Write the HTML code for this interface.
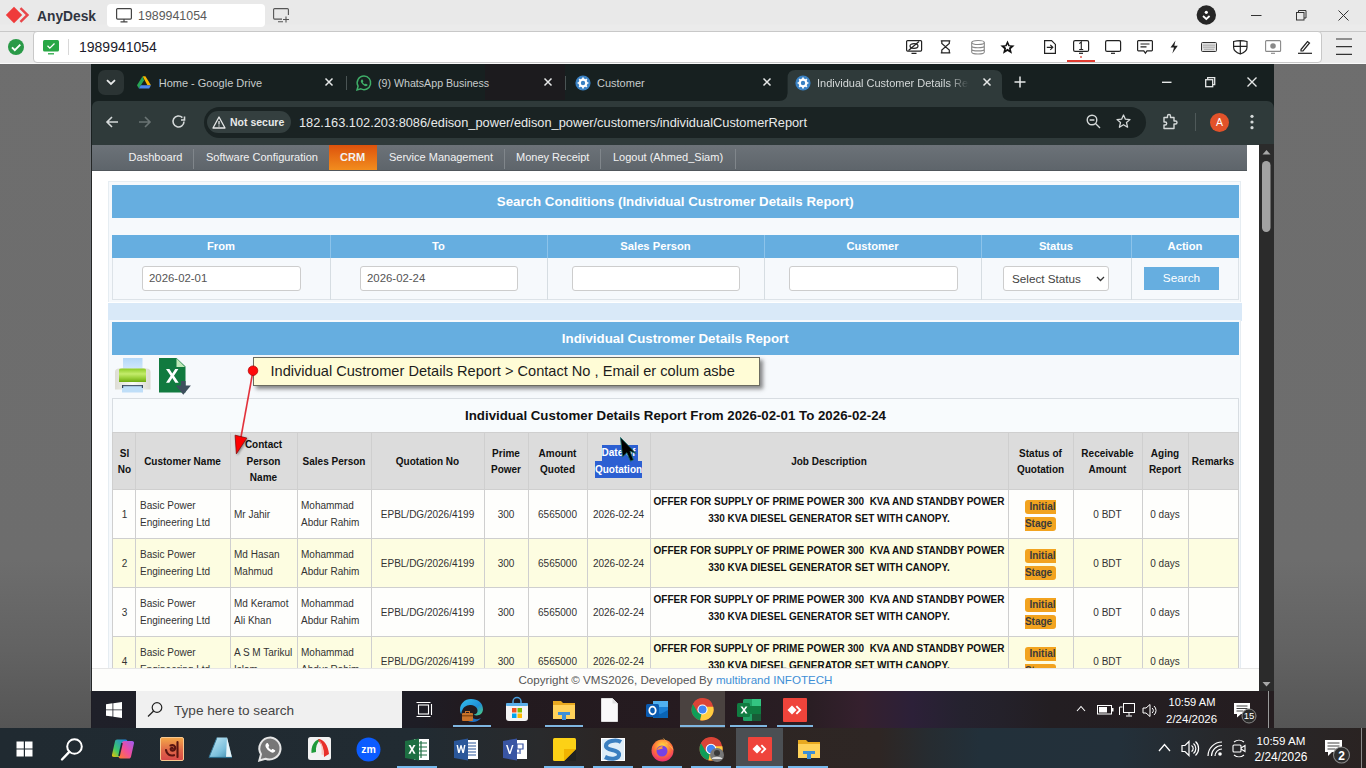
<!DOCTYPE html><html><head><meta charset="utf-8"><style>
*{box-sizing:border-box;margin:0;padding:0}
html,body{width:1366px;height:768px;overflow:hidden}
body{position:relative;background:linear-gradient(#6e6e6e 0px,#6d6d6d 560px,#626262 650px,#555555 728px,#555555 768px);font-family:"Liberation Sans",sans-serif;}
.a{position:absolute}
svg{display:block;overflow:visible}
.nw{white-space:nowrap}
#adtop{left:0;top:0;width:1366px;height:32px;background:linear-gradient(#e9e9e9 24px,#ebebeb 25px,#ebebeb 31px);border-bottom:1px solid #c8c8c8}
#adrow{left:0;top:32px;width:1366px;height:32px;background:linear-gradient(#ececec 31px,#fafafa 31px)}
#adaddr{left:33px;top:31px;width:1289px;height:32px;background:#fff;border:1px solid #c8c8c8;border-radius:4px}
#tabs{left:92px;top:64px;width:1182px;height:46px;background:#172020}
#tool{left:92px;top:101px;width:1182px;height:44px;background:#2f3a3a;border-radius:6px 7px 0 0}
#page{left:92px;top:145px;width:1167px;height:546px;background:#fff}
#sb{left:1259px;top:144px;width:15px;height:547px;background:#2b2b2b}
.tt{color:#c7cccc;font-size:11px;white-space:nowrap}
.ni{position:absolute;top:150.5px;color:#f2f2f2;font-size:11px;line-height:13px;white-space:nowrap}
.sep{position:absolute;top:149px;width:1px;height:20px;background:#80868b}
.blue{background:#66aee0}
.hd{color:#fff;font-weight:bold;font-size:13.3px;text-align:center;line-height:16px}
.inp{background:#fff;border:1px solid #cdcdcd;border-radius:3px;font-size:11.4px;color:#555;padding-left:6px;line-height:23px}
.vl{position:absolute;width:1px;background:#d2d8dc}
.cell{position:absolute;display:flex;align-items:center;font-size:10px;line-height:16.6px;color:#333}
.c{justify-content:center;text-align:center}
.hb{font-weight:bold;color:#111}
.lbl{background:#f2a31f;font-weight:bold;color:#3a3a3a;padding:1px 4px 2px;border-radius:3px;line-height:16.6px}
</style></head><body>
<div id="adtop" class="a"></div><div id="adrow" class="a"></div><div id="adaddr" class="a"></div>
<svg class="a" style="left:5px;top:5px" width="27" height="21" viewBox="0 0 27 21"><path d="M9 1.8L17.2 10L9 18.2L0.8 10Z" fill="#ef3b3b"/><path d="M16.3 2.2L24.2 10L16.3 17.8L14.6 16.1L20.7 10L14.6 3.9Z" fill="#e8464a"/></svg>
<div class="a nw" style="left:37px;top:7.5px;font-size:13.8px;font-weight:bold;line-height:17px;color:#30343f">AnyDesk</div>
<div class="a" style="left:107px;top:4px;width:158px;height:23px;background:#fff;border-radius:4px"></div>
<svg class="a" style="left:116px;top:8px" width="16" height="15" viewBox="0 0 16 15"><rect x="0.6" y="0.6" width="14.8" height="10.5" rx="1" fill="none" stroke="#444" stroke-width="1.2"/><path d="M8 11v2.5M4.5 13.8h7" stroke="#444" stroke-width="1.2"/></svg>
<div class="a nw" style="left:138px;top:9px;font-size:12.4px;line-height:15px;color:#5a5a5a">1989941054</div>
<svg class="a" style="left:273px;top:8px" width="17" height="15" viewBox="0 0 17 15"><path d="M9 11.1H1.6a1 1 0 0 1-1-1V1.6a1 1 0 0 1 1-1h12.8a1 1 0 0 1 1 1V7" fill="none" stroke="#555" stroke-width="1.1"/><path d="M5 13.8h5M13 8.5v6M10 11.5h6" stroke="#555" stroke-width="1.1"/></svg>
<svg class="a" style="left:1196px;top:5px" width="21" height="21" viewBox="0 0 21 21"><circle cx="10.3" cy="10" r="9.7" fill="#262626"/><circle cx="10.3" cy="7.3" r="1.6" fill="#fff"/><path d="M7 11l3.3 3 3.3-3" stroke="#fff" stroke-width="1.8" fill="none"/></svg>
<svg class="a" style="left:1250px;top:8px" width="100" height="14" viewBox="0 0 100 14"><path d="M1 7.5h10.5" stroke="#333" stroke-width="1"/><rect x="46.5" y="4.5" width="7.5" height="7.5" fill="none" stroke="#333" stroke-width="1"/><path d="M48.5 4.5V2.5h7.5v7.5h-2" fill="none" stroke="#333" stroke-width="1"/><path d="M88.5 2.5l10 10M98.5 2.5l-10 10" stroke="#333" stroke-width="1"/></svg>
<svg class="a" style="left:8px;top:39px" width="17" height="17" viewBox="0 0 17 17"><circle cx="8" cy="8" r="8" fill="#2a9a48"/><path d="M4 8.3l2.8 2.8L12.3 5.6" stroke="#fff" stroke-width="1.9" fill="none"/></svg>
<svg class="a" style="left:43px;top:40px" width="17" height="15" viewBox="0 0 17 15"><rect x="0" y="0" width="16" height="11.5" rx="1.5" fill="#28a745"/><path d="M4.5 5.8l2.3 2.3L11.5 3.5" stroke="#fff" stroke-width="1.3" fill="none"/><path d="M5 13.8h6" stroke="#28a745" stroke-width="1.3"/></svg>
<div class="a" style="left:68px;top:39px;width:1px;height:16px;background:#d8d8d8"></div>
<div class="a nw" style="left:79px;top:39px;font-size:14px;line-height:17px;color:#1b1b2b">1989941054</div>
<svg class="a" style="left:906px;top:40px" width="17" height="15" viewBox="0 0 17 15"><rect x="0.6" y="0.6" width="15" height="10.5" rx="1" stroke="#222" stroke-width="1.2" fill="none"/><path d="M2.5 10.5L13 1.5M5.5 13.3h5" stroke="#222" stroke-width="1.2" fill="none"/><ellipse cx="8" cy="6" rx="4" ry="2.3" stroke="#222" stroke-width="1.2" fill="none"/></svg>
<svg class="a" style="left:940px;top:40px" width="17" height="15" viewBox="0 0 17 15"><path d="M0.8 0.8h9.5M0.8 12.8h9.5M1.8 1v2.5L5.5 6.8L9.3 3.5V1M1.8 12.6v-2.6L5.5 6.8L9.3 10v2.6" stroke="#222" stroke-width="1.2" fill="none"/></svg>
<svg class="a" style="left:971px;top:40px" width="17" height="15" viewBox="0 0 17 15"><ellipse cx="7" cy="2.5" rx="6.3" ry="2" stroke="#888" stroke-width="1.1" fill="none"/><path d="M0.7 2.5v9.5c0 1.1 2.8 2 6.3 2s6.3-.9 6.3-2V2.5M0.7 5.7c0 1.1 2.8 2 6.3 2s6.3-.9 6.3-2M0.7 8.9c0 1.1 2.8 2 6.3 2s6.3-.9 6.3-2" stroke="#888" stroke-width="1.1" fill="none"/></svg>
<svg class="a" style="left:1000px;top:40px" width="17" height="15" viewBox="0 0 17 15"><path d="M7.5 0.5l2.1 4.7 5 .4-3.8 3.3 1.2 4.9-4.5-2.7-4.5 2.7 1.2-4.9L0.4 5.6l5-.4Z" fill="#111"/><path d="M7.5 4.3l.9 2 2.1.2-1.6 1.4.5 2-1.9-1.1-1.9 1.1.5-2-1.6-1.4 2.1-.2Z" fill="#fff"/></svg>
<svg class="a" style="left:1044px;top:40px" width="17" height="15" viewBox="0 0 17 15"><path d="M0.6 0.6h7l3.8 3.8v9H0.6Z" stroke="#222" stroke-width="1.2" fill="none"/><path d="M2.8 7.3h6M6.3 4.8l2.5 2.5-2.5 2.5" stroke="#222" stroke-width="1.2" fill="none"/></svg>
<svg class="a" style="left:1073px;top:40px" width="17" height="15" viewBox="0 0 17 15"><rect x="0.6" y="0.6" width="15" height="10.8" rx="1.5" stroke="#222" stroke-width="1.2" fill="none"/><path d="M6.3 3.6l2-1.6v7.5M6.2 9.5h4" stroke="#222" stroke-width="1.1" fill="none"/><path d="M6 13.3h4" stroke="#222" stroke-width="1.2" fill="none"/></svg>
<svg class="a" style="left:1105px;top:40px" width="17" height="15" viewBox="0 0 17 15"><rect x="0.6" y="0.6" width="15" height="10.8" rx="1.5" stroke="#222" stroke-width="1.2" fill="none"/><path d="M6 13.3h4" stroke="#222" stroke-width="1.2" fill="none"/></svg>
<svg class="a" style="left:1137px;top:40px" width="17" height="15" viewBox="0 0 17 15"><path d="M1.4 0.6h13.2a.8.8 0 0 1 .8.8v8.6a.8.8 0 0 1-.8.8H10l-1.6 2.3-1.6-2.3H1.4a.8.8 0 0 1-.8-.8V1.4a.8.8 0 0 1 .8-.8ZM3.5 4h9M3.5 6.8h6" stroke="#222" stroke-width="1.2" fill="none"/></svg>
<svg class="a" style="left:1169px;top:40px" width="17" height="15" viewBox="0 0 17 15"><path d="M6.5 0.5L1.5 7.5h3.5L3.3 13.5L8.8 5.8H5.3L6.5 0.5Z" fill="#222"/></svg>
<svg class="a" style="left:1201px;top:40px" width="17" height="15" viewBox="0 0 17 15"><rect x="0.5" y="2.5" width="15" height="9" rx="1" stroke="#333" stroke-width="1" fill="#ddd"/><path d="M2.5 5.2h11M2.5 7.2h11M3.5 9.3h9" stroke="#777" stroke-width="1" stroke-dasharray="1 1"/></svg>
<svg class="a" style="left:1233px;top:40px" width="17" height="15" viewBox="0 0 17 15"><path d="M0.6 1.5Q7.3 -0.2 14 1.5V7.5Q14 11.5 7.3 14Q0.6 11.5 0.6 7.5Z M7.3 0.7V13.8M0.6 6.3h13.4" stroke="#222" stroke-width="1.2" fill="none"/></svg>
<svg class="a" style="left:1265px;top:40px" width="17" height="15" viewBox="0 0 17 15"><rect x="0.6" y="0.6" width="15" height="10.8" rx="1" stroke="#888" stroke-width="1.1" fill="none"/><circle cx="8" cy="6" r="2.8" fill="#888"/><path d="M6 13.3h4" stroke="#888" stroke-width="1.1"/></svg>
<svg class="a" style="left:1298px;top:40px" width="17" height="15" viewBox="0 0 17 15"><path d="M3 9.5L9.5 1.5L11.5 3L5 11H3Z" stroke="#222" stroke-width="1.2" fill="none"/><path d="M0 13.3h14" stroke="#222" stroke-width="1.2"/></svg>
<div class="a" style="left:1067px;top:60px;width:28px;height:2px;background:#e03c31"></div>
<div class="a" style="left:1080px;top:56px;width:2px;height:2px;background:#e05a50;border-radius:1px"></div>
<svg class="a" style="left:1336px;top:38px" width="17" height="18" viewBox="0 0 17 18"><path d="M0 1h16M0 8.7h16M0 16.3h16" stroke="#333" stroke-width="1.2"/></svg>
<div id="tabs" class="a"></div><div id="tool" class="a"></div>
<div class="a" style="left:485px;top:64px;width:80px;height:36px;background:#1c1b1e"></div>
<div class="a" style="left:98px;top:70px;width:26px;height:25px;background:#2b3434;border-radius:7px"></div>
<svg class="a" style="left:106px;top:79px" width="10" height="7" viewBox="0 0 10 7"><path d="M1 1.2l4 3.8 4-3.8" stroke="#e8eaea" stroke-width="1.8" fill="none"/></svg>
<svg class="a" style="left:779px;top:70px" width="232" height="31" viewBox="0 0 232 31"><path d="M0 31Q8 31 8.6 23V8Q8.6 0 16.6 0H215Q223 0 223 8V23Q223.6 31 232 31Z" fill="#2f3a3a"/></svg>
<svg class="a" style="left:137px;top:75.5px" width="14" height="13" viewBox="0 0 14 13"><path d="M5.6 0.3h2.8L14 9.3h-3.6Z" fill="#f7b500"/><path d="M5.6 0.3L0 9.3l1.9 3.3L7 4.3Z" fill="#27a455"/><path d="M1.9 12.6h10.3L14 9.3H3.8Z" fill="#4a86f0"/></svg>
<div class="a tt" style="left:158.7px;top:77px;line-height:13px">Home - Google Drive</div>
<svg class="a" style="left:324.5px;top:78px" width="8" height="8" viewBox="0 0 8 8"><path d="M0.5 0.5l7 7M7.5 0.5l-7 7" stroke="#e6e8e8" stroke-width="1.5"/></svg>
<div class="a" style="left:346px;top:76px;width:1px;height:14px;background:#4a5454"></div>
<svg class="a" style="left:356px;top:75px" width="16" height="16" viewBox="0 0 16 16"><path d="M8 1a6.8 6.8 0 0 0-5.9 10.2L1 15l3.9-1.1A6.8 6.8 0 1 0 8 1Z" fill="none" stroke="#3fae68" stroke-width="1.5"/><path d="M5.6 4.6c.3-.3.7-.3.9 0l.8 1.4c.1.3 0 .6-.2.8l-.4.4c.4.9 1.2 1.7 2.1 2.1l.4-.4c.2-.2.5-.3.8-.2l1.4.8c.3.2.3.6 0 .9-.8.9-1.8 1-3 .4A7 7 0 0 1 5.2 7.6c-.6-1.2-.5-2.2.4-3Z" fill="#3fae68"/></svg>
<div class="a tt" style="left:378px;top:77px;line-height:13px;font-size:10.65px">(9) WhatsApp Business</div>
<svg class="a" style="left:543.5px;top:78px" width="8" height="8" viewBox="0 0 8 8"><path d="M0.5 0.5l7 7M7.5 0.5l-7 7" stroke="#e6e8e8" stroke-width="1.5"/></svg>
<div class="a" style="left:565px;top:76px;width:1px;height:14px;background:#4a5454"></div>
<svg class="a" style="left:575px;top:75px" width="16" height="16" viewBox="0 0 16 16"><circle cx="8" cy="8" r="7.6" fill="#3b82c4"/><circle cx="8" cy="8" r="3.3" fill="none" stroke="#fff" stroke-width="2.2"/><path d="M8 2.6v2M8 11.4v2M2.6 8h2M11.4 8h2M4.2 4.2l1.4 1.4M10.4 10.4l1.4 1.4M4.2 11.8l1.4-1.4M10.4 5.6l1.4-1.4" stroke="#fff" stroke-width="1.7"/></svg>
<div class="a tt" style="left:597px;top:77px;line-height:13px">Customer</div>
<svg class="a" style="left:763px;top:78px" width="8" height="8" viewBox="0 0 8 8"><path d="M0.5 0.5l7 7M7.5 0.5l-7 7" stroke="#e6e8e8" stroke-width="1.5"/></svg>
<svg class="a" style="left:795px;top:75px" width="16" height="16" viewBox="0 0 16 16"><circle cx="8" cy="8" r="7.6" fill="#3b82c4"/><circle cx="8" cy="8" r="3.3" fill="none" stroke="#fff" stroke-width="2.2"/><path d="M8 2.6v2M8 11.4v2M2.6 8h2M11.4 8h2M4.2 4.2l1.4 1.4M10.4 10.4l1.4 1.4M4.2 11.8l1.4-1.4M10.4 5.6l1.4-1.4" stroke="#fff" stroke-width="1.7"/></svg>
<div class="a tt" style="left:817px;top:77px;line-height:13px;width:152px;overflow:hidden;color:#d4d8d8;-webkit-mask-image:linear-gradient(90deg,#000 86%,transparent)">Individual Customer Details Report</div>
<svg class="a" style="left:982.5px;top:78px" width="8" height="8" viewBox="0 0 8 8"><path d="M0.5 0.5l7 7M7.5 0.5l-7 7" stroke="#e6e8e8" stroke-width="1.5"/></svg>
<svg class="a" style="left:1014px;top:76px" width="12" height="12" viewBox="0 0 12 12"><path d="M6 0.5v11M0.5 6h11" stroke="#e6e8e8" stroke-width="1.5"/></svg>
<svg class="a" style="left:1160px;top:76px" width="100" height="12" viewBox="0 0 100 12"><path d="M2 6.3h9.5" stroke="#e6e8e8" stroke-width="1.4"/><rect x="45.7" y="3.7" width="7" height="7" fill="none" stroke="#e6e8e8" stroke-width="1.3"/><path d="M47.7 3.6V1.6h7v7h-2" fill="none" stroke="#e6e8e8" stroke-width="1.3"/><path d="M87.5 1.5l9 9M96.5 1.5l-9 9" stroke="#e6e8e8" stroke-width="1.4"/></svg>
<svg class="a" style="left:104px;top:114px" width="85" height="16" viewBox="0 0 85 16"><path d="M14 8H3M8 3L3 8l5 5" stroke="#d5d9d9" stroke-width="1.6" fill="none"/><path d="M35 8h11M41 3l5 5-5 5" stroke="#6b7474" stroke-width="1.6" fill="none"/><path d="M80 7.5a5.5 5.5 0 1 1-1.6-3.9M80.5 2.5v3.5H77" stroke="#d5d9d9" stroke-width="1.6" fill="none"/></svg>
<div class="a" style="left:204px;top:107px;width:942px;height:31px;background:#1a2323;border-radius:16px"></div>
<div class="a" style="left:207px;top:111px;width:84px;height:22px;background:#343f3f;border-radius:11px"></div>
<svg class="a" style="left:212px;top:116px" width="14" height="13" viewBox="0 0 14 13"><path d="M7 1L13 12H1Z" fill="none" stroke="#e6e8e8" stroke-width="1.3" stroke-linejoin="round"/><path d="M7 5v3.5M7 9.6v1" stroke="#e6e8e8" stroke-width="1.3"/></svg>
<div class="a nw" style="left:230px;top:116px;font-size:10.5px;font-weight:bold;line-height:13px;color:#e8eaea">Not secure</div>
<div class="a nw" style="left:299px;top:115px;font-size:12.8px;line-height:15px;color:#e8eaea">182.163.102.203:8086/edison_power/edison_power/customers/individualCustomerReport</div>
<svg class="a" style="left:1086px;top:114px" width="16" height="16" viewBox="0 0 16 16"><circle cx="6" cy="6" r="4.8" fill="none" stroke="#d5d9d9" stroke-width="1.4"/><path d="M3.6 6h4.8M9.5 9.5l4.5 4.5" stroke="#d5d9d9" stroke-width="1.4"/></svg>
<svg class="a" style="left:1116px;top:114px" width="16" height="16" viewBox="0 0 16 16"><path d="M7.5 1l1.9 4.2 4.6.4-3.5 3 1.1 4.6-4.1-2.5-4.1 2.5 1.1-4.6-3.5-3 4.6-.4Z" fill="none" stroke="#d5d9d9" stroke-width="1.3" stroke-linejoin="round"/></svg>
<svg class="a" style="left:1162px;top:113px" width="18" height="18" viewBox="0 0 18 18"><path d="M2 4.5h3.5V3a1.5 1.5 0 0 1 3 0v1.5H12v3.5h1.5a1.5 1.5 0 0 1 0 3H12v4.5H2v-3.5h1.2a1.5 1.5 0 0 0 0-3H2Z" fill="none" stroke="#d5d9d9" stroke-width="1.4" stroke-linejoin="round"/></svg>
<div class="a" style="left:1195px;top:113px;width:1px;height:18px;background:#4f5959"></div>
<div class="a" style="left:1210px;top:112.5px;width:19px;height:19px;border-radius:50%;background:#e2522a;color:#fff;font-size:10.5px;line-height:19px;text-align:center">A</div>
<svg class="a" style="left:1250px;top:114px" width="4" height="16" viewBox="0 0 4 16"><circle cx="2" cy="2.3" r="1.6" fill="#d5d9d9"/><circle cx="2" cy="8" r="1.6" fill="#d5d9d9"/><circle cx="2" cy="13.7" r="1.6" fill="#d5d9d9"/></svg>
<div id="page" class="a"></div><div id="sb" class="a"></div>
<div class="a" style="left:91px;top:64px;width:1px;height:664px;background:linear-gradient(#172020 0px,#1a2020 80px,#252727 100px,#262828 627px,#1e1d25 628px)"></div><div class="a" style="left:90px;top:64px;width:1px;height:627px;background:#6f7377"></div>
<svg class="a" style="left:1259px;top:144px" width="15" height="547" viewBox="0 0 15 547"><path d="M3.5 10.5L7.5 6L11.5 10.5Z" fill="#a8a8a8"/><rect x="3" y="17" width="8.5" height="71" rx="4.2" fill="#a3a3a3"/><path d="M3.5 538L7.5 542.5L11.5 538Z" fill="#a8a8a8"/></svg>
<div class="a" style="left:92px;top:145px;width:1155px;height:26px;background:linear-gradient(#6c7278,#5e656b);border-bottom:1px solid #50565b"></div>
<div class="a" style="left:329px;top:145px;width:48px;height:24.5px;background:linear-gradient(#dd520c,#f28d1e)"></div>
<span class="ni" style="left:128.6px;">Dashboard</span>
<span class="ni" style="left:206px;">Software Configuration</span>
<span class="ni" style="left:340px;font-weight:bold">CRM</span>
<span class="ni" style="left:389px;">Service Management</span>
<span class="ni" style="left:516px;">Money Receipt</span>
<span class="ni" style="left:613px;">Logout (Ahmed_Siam)</span>
<span class="sep" style="left:193px"></span>
<span class="sep" style="left:504px"></span>
<span class="sep" style="left:600px"></span>
<span class="sep" style="left:735px"></span>
<div class="a" style="left:108px;top:181px;width:1133px;height:121px;background:#f6f9fc;border:1px solid #e6edf2;border-bottom:0"></div>
<div class="a blue hd" style="left:112px;top:185px;width:1126.5px;height:33px;line-height:33px">Search Conditions (Individual Custromer Details Report)</div>
<div class="a blue" style="left:112px;top:235px;width:1126.5px;height:23px"></div>
<div class="a" style="left:112px;top:258px;width:1127px;height:42px;border:1px solid #dde3e8;border-top:0;background:#f6f9fc"></div>
<div class="a hd" style="left:112px;top:235px;width:218px;height:23px;line-height:23px;font-size:11.2px">From</div>
<div class="a hd" style="left:330px;top:235px;width:217px;height:23px;line-height:23px;font-size:11.2px">To</div>
<div class="vl" style="left:330px;top:235px;height:65px;background:#d6dde2"></div>
<div class="vl" style="left:330px;top:235px;height:23px;background:#8cc3ea"></div>
<div class="a hd" style="left:547px;top:235px;width:217px;height:23px;line-height:23px;font-size:11.2px">Sales Person</div>
<div class="vl" style="left:547px;top:235px;height:65px;background:#d6dde2"></div>
<div class="vl" style="left:547px;top:235px;height:23px;background:#8cc3ea"></div>
<div class="a hd" style="left:764px;top:235px;width:217px;height:23px;line-height:23px;font-size:11.2px">Customer</div>
<div class="vl" style="left:764px;top:235px;height:65px;background:#d6dde2"></div>
<div class="vl" style="left:764px;top:235px;height:23px;background:#8cc3ea"></div>
<div class="a hd" style="left:981px;top:235px;width:150px;height:23px;line-height:23px;font-size:11.2px">Status</div>
<div class="vl" style="left:981px;top:235px;height:65px;background:#d6dde2"></div>
<div class="vl" style="left:981px;top:235px;height:23px;background:#8cc3ea"></div>
<div class="a hd" style="left:1131px;top:235px;width:108px;height:23px;line-height:23px;font-size:11.2px">Action</div>
<div class="vl" style="left:1131px;top:235px;height:65px;background:#d6dde2"></div>
<div class="vl" style="left:1131px;top:235px;height:23px;background:#8cc3ea"></div>
<div class="a inp" style="left:142px;top:266px;width:159px;height:25px">2026-02-01</div>
<div class="a inp" style="left:360px;top:266px;width:158px;height:25px">2026-02-24</div>
<div class="a inp" style="left:572px;top:266px;width:168px;height:25px"></div>
<div class="a inp" style="left:789px;top:266px;width:169px;height:25px"></div>
<div class="a inp" style="left:1003px;top:266px;width:106px;height:25px;padding-left:8px;color:#444;font-size:11.7px">Select Status<svg class="a" style="left:92px;top:9px" width="9" height="6"><path d="M1 1l3.5 3.5L8 1" stroke="#333" stroke-width="1.3" fill="none"/></svg></div>
<div class="a blue" style="left:1144px;top:267px;width:75px;height:23px;color:#fff;font-size:11.8px;text-align:center;line-height:23px">Search</div>
<div class="a" style="left:108px;top:303px;width:1134px;height:18px;background:#d9e9f8"></div>
<div class="a" style="left:108px;top:320px;width:1133px;height:360px;background:#f6f9fc;border-left:1px solid #e6edf2;border-right:1px solid #e6edf2"></div>
<div class="a blue hd" style="left:112px;top:322px;width:1126.5px;height:33px;line-height:33px">Individual Custromer Details Report</div>
<div class="a hd" style="left:112px;top:398px;width:1127px;height:35px;line-height:34px;color:#111;background:#f8fbfd;border:1px solid #d8dde2;border-bottom:0">Individual Customer Details Report From 2026-02-01 To 2026-02-24</div>
<div class="a" style="left:112px;top:432px;width:1127px;height:57px;background:#dcdcdc"></div>
<div class="a" style="left:112px;top:489px;width:1127px;height:49px;background:#fefefc"></div>
<div class="a" style="left:112px;top:538px;width:1127px;height:49px;background:#fdfde1"></div>
<div class="a" style="left:112px;top:587px;width:1127px;height:49px;background:#fefefc"></div>
<div class="a" style="left:112px;top:636px;width:1127px;height:49px;background:#fdfde1"></div>
<div class="cell c hb" style="left:113px;top:433.8px;width:23px;height:57px">Sl<br>No</div>
<div class="cell c hb" style="left:135px;top:433.7px;width:95px;height:57px">Customer Name</div>
<div class="cell c hb" style="left:230px;top:433.3px;width:67px;height:57px">Contact<br>Person<br>Name</div>
<div class="cell c hb" style="left:297px;top:433.7px;width:74px;height:57px">Sales Person</div>
<div class="cell c hb" style="left:371px;top:433.7px;width:113px;height:57px">Quotation No</div>
<div class="cell c hb" style="left:484px;top:433.8px;width:44px;height:57px">Prime<br>Power</div>
<div class="cell c hb" style="left:528px;top:433.8px;width:59px;height:57px">Amount<br>Quoted</div>
<div class="cell c hb" style="left:650px;top:433.7px;width:358px;height:57px">Job Description</div>
<div class="cell c hb" style="left:1008px;top:433.8px;width:65px;height:57px">Status of<br>Quotation</div>
<div class="cell c hb" style="left:1073px;top:433.8px;width:69px;height:57px">Receivable<br>Amount</div>
<div class="cell c hb" style="left:1142px;top:433.8px;width:46px;height:57px">Aging<br>Report</div>
<div class="cell c hb" style="left:1188px;top:433.7px;width:50px;height:57px">Remarks</div>
<div class="cell c" style="left:113px;top:491px;width:23px;height:49px;">1</div>
<div class="cell" style="left:135px;top:490px;width:95px;height:49px;padding-left:5px;">Basic Power<br>Engineering Ltd</div>
<div class="cell" style="left:230px;top:491px;width:67px;height:49px;padding-left:4px;">Mr Jahir</div>
<div class="cell" style="left:297px;top:490px;width:74px;height:49px;padding-left:4px;">Mohammad<br>Abdur Rahim</div>
<div class="cell c" style="left:371px;top:491px;width:113px;height:49px;">EPBL/DG/2026/4199</div>
<div class="cell c" style="left:484px;top:491px;width:44px;height:49px;">300</div>
<div class="cell c" style="left:528px;top:491px;width:59px;height:49px;">6565000</div>
<div class="cell c" style="left:587px;top:491px;width:63px;height:49px;">2026-02-24</div>
<div class="cell c" style="left:650px;top:490px;width:358px;height:49px;font-weight:bold;color:#111;padding-bottom:7px;">OFFER FOR SUPPLY OF PRIME POWER 300&nbsp; KVA AND STANDBY POWER<br>330 KVA DIESEL GENERATOR SET WITH CANOPY.</div>
<div class="cell c" style="left:1008px;top:490px;width:65px;height:49px;padding-top:2px;"><div><span class="lbl">Initial<br>Stage</span></div></div>
<div class="cell c" style="left:1073px;top:491px;width:69px;height:49px;">0 BDT</div>
<div class="cell c" style="left:1142px;top:491px;width:46px;height:49px;">0 days</div>
<div class="cell c" style="left:1188px;top:491px;width:50px;height:49px;"></div>
<div class="cell c" style="left:113px;top:540px;width:23px;height:49px;">2</div>
<div class="cell" style="left:135px;top:539px;width:95px;height:49px;padding-left:5px;">Basic Power<br>Engineering Ltd</div>
<div class="cell" style="left:230px;top:539px;width:67px;height:49px;padding-left:4px;">Md Hasan<br>Mahmud</div>
<div class="cell" style="left:297px;top:539px;width:74px;height:49px;padding-left:4px;">Mohammad<br>Abdur Rahim</div>
<div class="cell c" style="left:371px;top:540px;width:113px;height:49px;">EPBL/DG/2026/4199</div>
<div class="cell c" style="left:484px;top:540px;width:44px;height:49px;">300</div>
<div class="cell c" style="left:528px;top:540px;width:59px;height:49px;">6565000</div>
<div class="cell c" style="left:587px;top:540px;width:63px;height:49px;">2026-02-24</div>
<div class="cell c" style="left:650px;top:539px;width:358px;height:49px;font-weight:bold;color:#111;padding-bottom:7px;">OFFER FOR SUPPLY OF PRIME POWER 300&nbsp; KVA AND STANDBY POWER<br>330 KVA DIESEL GENERATOR SET WITH CANOPY.</div>
<div class="cell c" style="left:1008px;top:539px;width:65px;height:49px;padding-top:2px;"><div><span class="lbl">Initial<br>Stage</span></div></div>
<div class="cell c" style="left:1073px;top:540px;width:69px;height:49px;">0 BDT</div>
<div class="cell c" style="left:1142px;top:540px;width:46px;height:49px;">0 days</div>
<div class="cell c" style="left:1188px;top:540px;width:50px;height:49px;"></div>
<div class="cell c" style="left:113px;top:589px;width:23px;height:49px;">3</div>
<div class="cell" style="left:135px;top:588px;width:95px;height:49px;padding-left:5px;">Basic Power<br>Engineering Ltd</div>
<div class="cell" style="left:230px;top:588px;width:67px;height:49px;padding-left:4px;">Md Keramot<br>Ali Khan</div>
<div class="cell" style="left:297px;top:588px;width:74px;height:49px;padding-left:4px;">Mohammad<br>Abdur Rahim</div>
<div class="cell c" style="left:371px;top:589px;width:113px;height:49px;">EPBL/DG/2026/4199</div>
<div class="cell c" style="left:484px;top:589px;width:44px;height:49px;">300</div>
<div class="cell c" style="left:528px;top:589px;width:59px;height:49px;">6565000</div>
<div class="cell c" style="left:587px;top:589px;width:63px;height:49px;">2026-02-24</div>
<div class="cell c" style="left:650px;top:588px;width:358px;height:49px;font-weight:bold;color:#111;padding-bottom:7px;">OFFER FOR SUPPLY OF PRIME POWER 300&nbsp; KVA AND STANDBY POWER<br>330 KVA DIESEL GENERATOR SET WITH CANOPY.</div>
<div class="cell c" style="left:1008px;top:588px;width:65px;height:49px;padding-top:2px;"><div><span class="lbl">Initial<br>Stage</span></div></div>
<div class="cell c" style="left:1073px;top:589px;width:69px;height:49px;">0 BDT</div>
<div class="cell c" style="left:1142px;top:589px;width:46px;height:49px;">0 days</div>
<div class="cell c" style="left:1188px;top:589px;width:50px;height:49px;"></div>
<div class="cell c" style="left:113px;top:638px;width:23px;height:49px;">4</div>
<div class="cell" style="left:135px;top:637px;width:95px;height:49px;padding-left:5px;">Basic Power<br>Engineering Ltd</div>
<div class="cell" style="left:230px;top:637px;width:67px;height:49px;padding-left:4px;">A S M Tarikul<br>Islam</div>
<div class="cell" style="left:297px;top:637px;width:74px;height:49px;padding-left:4px;">Mohammad<br>Abdur Rahim</div>
<div class="cell c" style="left:371px;top:638px;width:113px;height:49px;">EPBL/DG/2026/4199</div>
<div class="cell c" style="left:484px;top:638px;width:44px;height:49px;">300</div>
<div class="cell c" style="left:528px;top:638px;width:59px;height:49px;">6565000</div>
<div class="cell c" style="left:587px;top:638px;width:63px;height:49px;">2026-02-24</div>
<div class="cell c" style="left:650px;top:637px;width:358px;height:49px;font-weight:bold;color:#111;padding-bottom:7px;">OFFER FOR SUPPLY OF PRIME POWER 300&nbsp; KVA AND STANDBY POWER<br>330 KVA DIESEL GENERATOR SET WITH CANOPY.</div>
<div class="cell c" style="left:1008px;top:637px;width:65px;height:49px;padding-top:2px;"><div><span class="lbl">Initial<br>Stage</span></div></div>
<div class="cell c" style="left:1073px;top:638px;width:69px;height:49px;">0 BDT</div>
<div class="cell c" style="left:1142px;top:638px;width:46px;height:49px;">0 days</div>
<div class="cell c" style="left:1188px;top:638px;width:50px;height:49px;"></div>
<div class="vl" style="left:112px;top:432px;height:260px;background:#cfcfcf"></div>
<div class="vl" style="left:135px;top:432px;height:260px;background:#cfcfcf"></div>
<div class="vl" style="left:230px;top:432px;height:260px;background:#cfcfcf"></div>
<div class="vl" style="left:297px;top:432px;height:260px;background:#cfcfcf"></div>
<div class="vl" style="left:371px;top:432px;height:260px;background:#cfcfcf"></div>
<div class="vl" style="left:484px;top:432px;height:260px;background:#cfcfcf"></div>
<div class="vl" style="left:528px;top:432px;height:260px;background:#cfcfcf"></div>
<div class="vl" style="left:587px;top:432px;height:260px;background:#cfcfcf"></div>
<div class="vl" style="left:650px;top:432px;height:260px;background:#cfcfcf"></div>
<div class="vl" style="left:1008px;top:432px;height:260px;background:#cfcfcf"></div>
<div class="vl" style="left:1073px;top:432px;height:260px;background:#cfcfcf"></div>
<div class="vl" style="left:1142px;top:432px;height:260px;background:#cfcfcf"></div>
<div class="vl" style="left:1188px;top:432px;height:260px;background:#cfcfcf"></div>
<div class="vl" style="left:1238px;top:432px;height:260px;background:#cfcfcf"></div>
<div class="a" style="left:112px;top:432px;width:1127px;height:1px;background:#cfcfcf"></div>
<div class="a" style="left:112px;top:489px;width:1127px;height:1px;background:#cfcfcf"></div>
<div class="a" style="left:112px;top:538px;width:1127px;height:1px;background:#cfcfcf"></div>
<div class="a" style="left:112px;top:587px;width:1127px;height:1px;background:#cfcfcf"></div>
<div class="a" style="left:112px;top:636px;width:1127px;height:1px;background:#cfcfcf"></div>
<svg class="a" style="left:114px;top:357px" width="38" height="37" viewBox="0 0 38 37"><defs><linearGradient id="pg" x1="0" y1="0" x2="0" y2="1"><stop offset="0" stop-color="#b4d8f8"/><stop offset="1" stop-color="#d6eafc"/></linearGradient><linearGradient id="gg" x1="0" y1="0" x2="0" y2="1"><stop offset="0" stop-color="#8ccb26"/><stop offset=".4" stop-color="#c4ec6c"/><stop offset=".7" stop-color="#9ad03a"/><stop offset="1" stop-color="#6eaa10"/></linearGradient><linearGradient id="bg2" x1="0" y1="0" x2="1" y2="0"><stop offset="0" stop-color="#dcdcd4"/><stop offset=".5" stop-color="#fbfbf6"/><stop offset="1" stop-color="#dadad2"/></linearGradient></defs><rect x="9" y="1" width="19.5" height="13" fill="url(#pg)"/><path d="M1 15Q1 11.5 5 11.5H32.5Q36.5 11.5 36.5 15V32.5H1Z" fill="url(#bg2)"/><path d="M5 12.5Q5 11.5 8 11.5H29.5Q32 11.5 32 12.5V25H5Z" fill="url(#gg)"/><rect x="8" y="28" width="21" height="7.5" fill="#bfdef8"/><rect x="8" y="28" width="21" height="1.2" fill="#4a5a70"/><rect x="8" y="28" width="1.2" height="3" fill="#33475e"/><rect x="27.8" y="28" width="1.2" height="3" fill="#33475e"/></svg>
<svg class="a" style="left:159px;top:358px" width="33" height="37" viewBox="0 0 33 37"><path d="M0 0h17.5L26.5 8.5V34.6H0Z" fill="#117a3f"/><path d="M17.5 0.5L26 9h-8.5Z" fill="#bfe8b8"/><path d="M7 11l4.6 6.8L7 24.7h3.3l3-4.7 3 4.7h3.4l-4.7-6.9L19.4 11h-3.2l-2.9 4.5L10.4 11Z" fill="#fff"/><path d="M22 23h4.6v4.5h5.3L24.3 36.8L16.8 27.5h5.2Z" fill="#3e4f5e"/></svg>
<div class="a" style="left:253px;top:357px;width:507px;height:29px;background:#fffcd6;border:1px solid #6b6b60;box-shadow:3px 3px 4px rgba(40,40,40,.55)"></div>
<div class="a nw" style="left:270.5px;top:363px;font-size:14.6px;line-height:17px;color:#1c1c1c">Individual Custromer Details Report &gt; Contact No , Email er colum asbe</div>
<svg class="a" style="left:0;top:0" width="1366" height="768" viewBox="0 0 1366 768"><line x1="253" y1="371" x2="241" y2="437" stroke="#e2323c" stroke-width="1.6"/><path d="M235.1 435.2L246.8 438.1L236.4 453.8Z" fill="#ff0000" stroke="#8a0a0a" stroke-width="0.8" style="filter:drop-shadow(1px 1px 1px rgba(0,0,0,.4))"/><circle cx="253" cy="370.7" r="4.8" fill="#ff0a0a" stroke="#a00" stroke-width="0.7"/></svg>
<div class="a" style="left:602px;top:444.5px;width:36px;height:16.5px;background:#2c5fd2"></div>
<div class="a" style="left:595px;top:460.7px;width:47px;height:17px;background:#2c5fd2"></div>
<div class="cell c hb" style="left:587px;top:433px;width:63px;height:57px;color:#fff">Date of<br>Quotation</div>
<svg class="a" style="left:0;top:0" width="1366" height="768" viewBox="0 0 1366 768"><path d="M620.5 437.5L622.5 457L626.8 452.8L630.5 461.2L633.5 459.8L630 451.3L636 453.5Z" fill="#000" stroke="#1d6d6a" stroke-width="0.9" stroke-linejoin="round"/></svg>
<div class="a" style="left:92px;top:668px;width:1167px;height:23px;background:#fdfdfb;border-top:1px solid #e6e6e6"></div>
<div class="a nw" style="left:518.5px;top:673px;font-size:11.6px;line-height:13px;color:#555">Copyright © VMS2026, Developed By <span style="color:#3d8fd6">multibrand INFOTECH</span></div>
<div class="a" style="left:92px;top:691px;width:1182px;height:37px;background:linear-gradient(90deg,#1f2029 0px,#1e1d25 330px,#221a1f 380px,#261b20 600px,#2a1e24 720px,#35202e 770px,#2c2038 820px,#25222f 870px,#24212a 910px,#231e22 960px,#251d20 1182px)"></div>
<div class="a" style="left:136px;top:691px;width:266px;height:37px;background:#f0f0f0"></div>
<div class="a nw" style="left:174px;top:702px;font-size:13.6px;line-height:17px;color:#454545">Type here to search</div>
<div class="a" style="left:0;top:728px;width:1366px;height:40px;background:linear-gradient(90deg,#202a31 0px,#212b32 420px,#292a2c 540px,#2c2523 620px,#2e2624 880px,#262c31 930px,#22303a 980px,#23303a 1120px,#27282b 1220px,#2a2322 1366px)"></div>
<svg class="a" style="left:106px;top:702px" width="16" height="16" viewBox="0 0 16 16"><path d="M0 2.2L6.5 1.3V7.5H0ZM7.3 1.2L16 0V7.5H7.3ZM0 8.3H6.5V14.6L0 13.7ZM7.3 8.3H16V16L7.3 14.8Z" fill="#fff"/></svg>
<svg class="a" style="left:147px;top:702px" width="16" height="15" viewBox="0 0 16 15"><circle cx="10" cy="5.5" r="4.8" fill="none" stroke="#222" stroke-width="1.2"/><path d="M6.6 9L1 14.5" stroke="#222" stroke-width="1.3"/></svg>
<svg class="a" style="left:416px;top:702px" width="17" height="15" viewBox="0 0 17 15"><rect x="2.5" y="3" width="10" height="9" fill="none" stroke="#fff" stroke-width="1.1"/><path d="M0.5 0.5h14M0.5 14.5h14M15.5 2v11" stroke="#fff" stroke-width="1.1"/></svg>
<svg class="a" style="left:459px;top:698px" width="25" height="25" viewBox="0 0 25 25"><defs><linearGradient id="eg" x1="0" y1="0" x2="1" y2="1"><stop offset="0" stop-color="#35c1f1"/><stop offset=".6" stop-color="#1f8fd6"/><stop offset="1" stop-color="#52d17a"/></linearGradient></defs><path d="M12 1C5.5 1 1 6 1 11.5c0 2 .5 3.5 1.3 4.5C3 9 8 6.5 12 7c4.5.5 7 3.5 6.5 6.5-.3 2-2 3-4 3 3 2 9 1 9.5-5C24 5 19 1 12 1Z" fill="url(#eg)"/><path d="M3 16c1 5 6 8 11 8 3 0 6-1.5 8-4-3 2-8 1.5-10-2" fill="#1e6fc0"/><rect x="3" y="15" width="11" height="8" rx="1" fill="#c8722a"/><rect x="3" y="17" width="11" height="1.5" fill="#8a4a15"/><rect x="6.5" y="13.5" width="4" height="2" fill="none" stroke="#c8722a" stroke-width="1"/></svg>
<svg class="a" style="left:505px;top:698px" width="24" height="24" viewBox="0 0 24 24"><path d="M8 5V3.5a4 4 0 0 1 8 0V5" fill="none" stroke="#4aa0e0" stroke-width="1.5"/><rect x="1" y="5" width="22" height="18" rx="3" fill="#f4f4f4"/><rect x="1" y="5" width="22" height="3" rx="1" fill="#5bb0ea"/><rect x="7" y="10" width="4.5" height="4.5" fill="#f25022"/><rect x="12.5" y="10" width="4.5" height="4.5" fill="#7fba00"/><rect x="7" y="15.5" width="4.5" height="4.5" fill="#00a4ef"/><rect x="12.5" y="15.5" width="4.5" height="4.5" fill="#ffb900"/></svg>
<svg class="a" style="left:552px;top:699px" width="24" height="22" viewBox="0 0 24 22"><path d="M1 2h8l2 2h12v16H1Z" fill="#e8a920"/><rect x="1" y="6" width="22" height="14" fill="#ffd25a"/><rect x="6" y="13" width="12" height="3" fill="#3d8fd6"/><rect x="10" y="16" width="4" height="5" fill="#3d8fd6"/></svg>
<svg class="a" style="left:601px;top:698px" width="17" height="24" viewBox="0 0 17 24"><path d="M0.5 0.5h11l5 5v18h-16Z" fill="#fafafa" stroke="#ddd" stroke-width="1"/><path d="M11.5 0.5v5h5" fill="#e0e0e0"/></svg>
<svg class="a" style="left:645px;top:698px" width="24" height="24" viewBox="0 0 24 24"><rect x="8" y="3" width="15" height="17" rx="1.5" fill="#1a7fd4"/><rect x="8" y="3" width="15" height="6" fill="#50b0f0"/><path d="M8 12l7.5 4 7.5-4v8H8Z" fill="#0a64b4"/><rect x="1" y="6" width="13" height="13" rx="1.5" fill="#0a5ab0"/><ellipse cx="7.5" cy="12.5" rx="3.2" ry="3.8" fill="none" stroke="#fff" stroke-width="1.8"/></svg>
<div class="a" style="left:680px;top:691px;width:45px;height:37px;background:#4a4240"></div>
<svg class="a" style="left:691px;top:698px" width="23" height="23" viewBox="0 0 24 24"><circle cx="12" cy="12" r="11.5" fill="#db4437"/><path d="M12 12L2 6.3A11.5 11.5 0 0 0 9.5 23.2Z" fill="#0f9d58"/><path d="M12 12l-2.5 11.2A11.5 11.5 0 0 0 23.3 9.2H12Z" fill="#ffcd40"/><path d="M12 6.5h10.5A11.5 11.5 0 0 0 2 6.3l5.2 9Z" fill="#db4437"/><circle cx="12" cy="12" r="5.3" fill="#fff"/><circle cx="12" cy="12" r="4.2" fill="#4285f4"/></svg>
<svg class="a" style="left:737px;top:699px" width="24" height="22" viewBox="0 0 24 22"><rect x="6" y="0" width="18" height="22" rx="1.5" fill="#21a366"/><rect x="6" y="7" width="18" height="8" fill="#107c41"/><rect x="15" y="0" width="9" height="7" fill="#33c481"/><rect x="15" y="15" width="9" height="7" fill="#185c37"/><rect x="0" y="4" width="13" height="14" rx="1.5" fill="#107c41"/><path d="M3.5 7.5l2.5 3.5-2.5 3.5h2l1.5-2.3 1.5 2.3h2L8 11l2.5-3.5h-2L7 9.8 5.5 7.5Z" fill="#fff"/></svg>
<svg class="a" style="left:783px;top:698px" width="24" height="24" viewBox="0 0 24 24"><rect width="24" height="24" rx="1" fill="#ef443b"/><path d="M9 7.5l4.5 4.5L9 16.5 4.5 12Z" fill="#fff"/><path d="M14 7.5l4.5 4.5L14 16.5l-1.3-1.3 3.2-3.2-3.2-3.2Z" fill="#fff"/></svg>
<div class="a" style="left:453px;top:725px;width:38px;height:2px;background:#7fb6e0"></div>
<div class="a" style="left:545px;top:725px;width:38px;height:2px;background:#7fb6e0"></div>
<div class="a" style="left:680px;top:725px;width:45px;height:2px;background:#7fb6e0"></div>
<div class="a" style="left:730px;top:725px;width:37px;height:2px;background:#7fb6e0"></div>
<div class="a" style="left:777px;top:725px;width:36px;height:2px;background:#7fb6e0"></div>
<svg class="a" style="left:1076px;top:704.5px" width="10" height="7" viewBox="0 0 10 7"><path d="M1 6l4-4.5L9 6" stroke="#fff" stroke-width="1.1" fill="none"/></svg>
<svg class="a" style="left:1097px;top:705px" width="17" height="10" viewBox="0 0 17 10"><rect x="0.5" y="0.5" width="14" height="8.5" fill="none" stroke="#fff" stroke-width="1"/><rect x="2" y="2" width="8" height="5.5" fill="#fff"/><rect x="15" y="3" width="1.5" height="3.5" fill="#fff"/></svg>
<svg class="a" style="left:1119px;top:703px" width="16" height="15" viewBox="0 0 16 15"><rect x="4.5" y="0.5" width="11" height="9" fill="none" stroke="#fff" stroke-width="1"/><path d="M10 10v2.5M7 13h6M0.5 4v8M0.5 4h3" stroke="#fff" stroke-width="1"/></svg>
<svg class="a" style="left:1142px;top:703px" width="16" height="15" viewBox="0 0 16 15"><path d="M1 5h3l4-3.5v12L4 10H1Z" fill="none" stroke="#fff" stroke-width="1"/><path d="M10 5a3 3 0 0 1 0 5M12 3a6 6 0 0 1 0 9" stroke="#fff" stroke-width="1" fill="none"/></svg>
<div class="a nw" style="left:1168.5px;top:694.5px;font-size:11.1px;line-height:14px;color:#fff">10:59 AM</div>
<div class="a nw" style="left:1166px;top:711.5px;font-size:11.5px;line-height:14px;color:#fff">2/24/2026</div>
<svg class="a" style="left:1233px;top:701.5px" width="26" height="22" viewBox="0 0 26 22"><path d="M1 1h16v11H8l-4 3.5V12H1Z" fill="#fff"/><path d="M3.5 4h11M3.5 6.5h11M3.5 9h7" stroke="#444" stroke-width="1"/><circle cx="16" cy="14" r="7" fill="#2a2a2a" stroke="#888" stroke-width="1"/><text x="16" y="17.3" font-family="Liberation Sans" font-size="9.5" fill="#fff" text-anchor="middle">15</text></svg>
<div class="a" style="left:1268px;top:691px;width:1px;height:37px;background:#9a9a9a"></div>
<svg class="a" style="left:16px;top:741px" width="17" height="16" viewBox="0 0 16 16"><path d="M0 0.5H7.3V7.5H0ZM8.5 0.5H16V7.5H8.5ZM0 8.5H7.3V15.5H0ZM8.5 8.5H16V15.5H8.5Z" fill="#fff"/></svg>
<svg class="a" style="left:60px;top:738px" width="24" height="23" viewBox="0 0 24 23"><circle cx="14.5" cy="8.5" r="7.3" fill="none" stroke="#fff" stroke-width="2"/><path d="M9.3 13.8L2 21.5" stroke="#fff" stroke-width="2.4" stroke-linecap="round"/></svg>
<svg class="a" style="left:111px;top:737px" width="24" height="24" viewBox="0 0 24 24"><defs><linearGradient id="cpa" x1="0" y1="1" x2="1" y2="0"><stop offset="0" stop-color="#f5c000"/><stop offset=".35" stop-color="#3cc86a"/><stop offset="1" stop-color="#1f7cf0"/></linearGradient><linearGradient id="cpb" x1="0" y1="1" x2="1" y2="0"><stop offset="0" stop-color="#ff7a2a"/><stop offset=".5" stop-color="#ef4da0"/><stop offset="1" stop-color="#9c5cf5"/></linearGradient></defs><path d="M6 2.5h8.5c1.3 0 2 .8 1.7 2L13 18c-.3 1.3-1.2 2-2.5 2H3c-1.5 0-2.3-1-2-2.3L4 4.3C4.3 3.2 5 2.5 6 2.5Z" fill="url(#cpa)"/><path d="M13.5 4h7.5c1.5 0 2.3 1 2 2.3L20 19.7c-.3 1.1-1 1.8-2 1.8H9.5c-1.3 0-2-.8-1.7-2L11 6c.3-1.3 1.2-2 2.5-2Z" fill="url(#cpb)"/><path d="M11 6L8 19" stroke="#1a2a33" stroke-width="1.6"/></svg>
<svg class="a" style="left:160px;top:737px" width="24" height="24" viewBox="0 0 24 24"><defs><linearGradient id="bn" x1="0" y1="0" x2="0" y2="1"><stop offset="0" stop-color="#f4a848"/><stop offset=".55" stop-color="#e06848"/><stop offset="1" stop-color="#d84848"/></linearGradient></defs><rect x=".5" y=".5" width="23" height="23" rx="1.5" fill="url(#bn)" stroke="#f8c890" stroke-width="1"/><path d="M10.5 8.5c2.8-1.2 5.2.6 4.6 3.2-.6 2.4-4 2.6-4.4.6-.3-1.4 1.4-2 2.2-1M6 13c.5 4 4 6.5 8 5.2M17.5 5v15" stroke="#5a1410" stroke-width="2.1" fill="none" stroke-linecap="round"/></svg>
<svg class="a" style="left:208px;top:737px" width="25" height="22" viewBox="0 0 25 22"><defs><linearGradient id="np" x1="0" y1="0" x2="1" y2="1"><stop offset="0" stop-color="#c8ecf8"/><stop offset=".6" stop-color="#7cc0dc"/><stop offset="1" stop-color="#3a86a8"/></linearGradient></defs><path d="M9 0.5h10l5 20H1Z" fill="url(#np)"/><path d="M19 0.5l5 20h-6Z" fill="#e8f4f8"/><path d="M1 20.5h23" stroke="#2a6a88" stroke-width="1.2"/><path d="M9 0.5L1 20.5" stroke="#3a7a98" stroke-width="1"/></svg>
<svg class="a" style="left:258px;top:736px" width="25" height="26" viewBox="0 0 25 26"><path d="M12.5 1.5A11 11 0 0 0 3 18.2L1.3 24.5 7.5 22.7A11 11 0 1 0 12.5 1.5Z" fill="#777" stroke="#e6e6e6" stroke-width="2"/><path d="M8.6 7.2c.4-.4 1-.4 1.3 0l1.2 2c.2.4 0 .9-.3 1.2l-.5.5c.7 1.3 1.7 2.3 3 3l.5-.5c.3-.3.8-.5 1.2-.3l2 1.2c.4.3.4.9 0 1.3-1.2 1.3-2.6 1.4-4.3.5A10 10 0 0 1 8 11.4c-.9-1.7-.8-3.1.6-4.2Z" fill="#fff"/></svg>
<svg class="a" style="left:308px;top:737px" width="23" height="23" viewBox="0 0 23 23"><rect width="23" height="23" rx="2.5" fill="#f2f2f2"/><path d="M11 2c-5 2-8 7-7.5 14l4.5-1c-.5-5 1-9 4-12Z" fill="#1f9a3a"/><path d="M11 2c5 1 9 6 10 15l-5 3c0-7-2-12-6-17Z" fill="#e8302a"/><path d="M11 2.5c2 3 3 8 2.5 15l2.5.5c0-6-1.5-11-5-15.5Z" fill="#f8c8c0"/></svg>
<svg class="a" style="left:356px;top:737px" width="25" height="25" viewBox="0 0 25 25"><circle cx="12.5" cy="12.5" r="12" fill="#0b5cff"/><text x="12.5" y="16" font-family="Liberation Sans" font-size="10.5" font-weight="bold" fill="#fff" text-anchor="middle">zm</text></svg>
<svg class="a" style="left:405px;top:738px" width="24" height="23" viewBox="0 0 24 23"><rect x="9" y="1" width="15" height="21" fill="#fff"/><path d="M11 5h11M11 9h11M11 13h11M11 17h11M16 3v17" stroke="#1d6f42" stroke-width="1.2"/><path d="M0 3L14 0.5V22.5L0 20Z" fill="#1d6f42"/><path d="M3.5 7l2.5 4.3-2.6 4.4h2l1.6-2.9 1.6 2.9h2L8 11.3l2.5-4.3h-2L7 9.8 5.5 7Z" fill="#fff"/></svg>
<svg class="a" style="left:454px;top:738px" width="24" height="23" viewBox="0 0 24 23"><rect x="9" y="2" width="15" height="19" fill="#fff"/><path d="M11 5h11M11 8h11M11 11h11M11 14h11M11 17h11" stroke="#2b579a" stroke-width="1.2"/><path d="M0 3L14 0.5V22.5L0 20Z" fill="#2b579a"/><path d="M2.5 7l1.6 8h1.5l1.4-5 1.4 5h1.5l1.6-8h-1.5l-.9 5.3L7.5 7H6.5L5 12.3 4 7Z" fill="#fff"/></svg>
<svg class="a" style="left:503px;top:738px" width="24" height="23" viewBox="0 0 24 23"><rect x="9" y="2" width="15" height="19" fill="#fff"/><path d="M14 6h6v5h-6ZM12 15h4M17 11v5" stroke="#3955a3" stroke-width="1.2" fill="none"/><path d="M0 3L14 0.5V22.5L0 20Z" fill="#3955a3"/><path d="M3 7l3 9h1.5l3-9H9L6.8 13.8 4.6 7Z" fill="#fff"/></svg>
<svg class="a" style="left:553px;top:738px" width="23" height="23" viewBox="0 0 23 23"><rect width="23" height="23" rx="1.5" fill="#fcd116"/><path d="M11 23l12-12v12Z" fill="#222"/><path d="M11 23V11h12" fill="#f0b400"/></svg>
<svg class="a" style="left:601px;top:738px" width="24" height="23" viewBox="0 0 24 23"><rect width="24" height="23" fill="#fff"/><rect x="1" y="1" width="22" height="21" fill="#dfeef8"/><path d="M20 4C15 1 5 3 5 8s12 3 13 8-8 6-14 3" stroke="#3a7fc0" stroke-width="4.2" fill="none"/></svg>
<svg class="a" style="left:650px;top:737px" width="25" height="25" viewBox="0 0 25 25"><defs><radialGradient id="ff" cx=".5" cy=".3" r=".8"><stop offset="0" stop-color="#ffe23f"/><stop offset=".5" stop-color="#ff7139"/><stop offset="1" stop-color="#e31587"/></radialGradient></defs><circle cx="12.5" cy="13.5" r="11" fill="url(#ff)"/><path d="M12.5 0.5c3 2 4 4 3 6 5 1 8 5 8 7" fill="#ffbd4f"/><circle cx="12" cy="14" r="5.5" fill="#7542e5"/><path d="M7 13c1-3 4-4 6-4-1 1-1 2 0 2.5" fill="#ff9640"/></svg>
<svg class="a" style="left:699px;top:737px" width="24" height="24" viewBox="0 0 24 24"><circle cx="12" cy="12" r="11.5" fill="#db4437"/><path d="M12 12L2 6.3A11.5 11.5 0 0 0 9.5 23.2Z" fill="#0f9d58"/><path d="M12 12l-2.5 11.2A11.5 11.5 0 0 0 23.3 9.2H12Z" fill="#ffcd40"/><path d="M12 6.5h10.5A11.5 11.5 0 0 0 2 6.3l5.2 9Z" fill="#db4437"/><circle cx="12" cy="12" r="5.3" fill="#fff"/><circle cx="12" cy="12" r="4.2" fill="#4285f4"/></svg>
<svg class="a" style="left:710px;top:748px" width="14" height="14" viewBox="0 0 14 14"><circle cx="7" cy="7" r="7" fill="#777"/><circle cx="7" cy="5" r="3" fill="#3a3a3a"/><path d="M1.5 11c1-3 10-3 11 0" fill="#ddd"/></svg>
<div class="a" style="left:736px;top:728px;width:47px;height:40px;background:#4b4f53"></div>
<svg class="a" style="left:748px;top:737px" width="24" height="24" viewBox="0 0 24 24"><rect width="24" height="24" rx="1" fill="#ef443b"/><path d="M9 7.5l4.5 4.5L9 16.5 4.5 12Z" fill="#fff"/><path d="M14 7.5l4.5 4.5L14 16.5l-1.3-1.3 3.2-3.2-3.2-3.2Z" fill="#fff"/></svg>
<svg class="a" style="left:797px;top:738px" width="24" height="22" viewBox="0 0 24 22"><path d="M1 2h8l2 2h12v16H1Z" fill="#e8a920"/><rect x="1" y="6" width="22" height="14" fill="#ffd25a"/><rect x="6" y="13" width="12" height="3" fill="#3d8fd6"/><rect x="10" y="16" width="4" height="5" fill="#3d8fd6"/></svg>
<div class="a" style="left:397px;top:766px;width:40px;height:2px;background:#76b9ed"></div>
<div class="a" style="left:544px;top:766px;width:40px;height:2px;background:#76b9ed"></div>
<div class="a" style="left:593px;top:766px;width:40px;height:2px;background:#76b9ed"></div>
<div class="a" style="left:642px;top:766px;width:40px;height:2px;background:#76b9ed"></div>
<div class="a" style="left:691px;top:766px;width:40px;height:2px;background:#76b9ed"></div>
<div class="a" style="left:736px;top:766px;width:47px;height:2px;background:#76b9ed"></div>
<div class="a" style="left:788px;top:766px;width:40px;height:2px;background:#76b9ed"></div>
<svg class="a" style="left:1158px;top:743px" width="13" height="9" viewBox="0 0 13 9"><path d="M1 8l5.5-6.5L12 8" stroke="#fff" stroke-width="1.3" fill="none"/></svg>
<svg class="a" style="left:1181px;top:740px" width="17" height="17" viewBox="0 0 17 17"><path d="M1 5.5h3l4-4v14l-4-4H1Z" fill="none" stroke="#fff" stroke-width="1.2"/><path d="M10.5 5.5a3.5 3.5 0 0 1 0 6M12.5 3.5a6.5 6.5 0 0 1 0 10M14.5 1.5a9.5 9.5 0 0 1 0 14" stroke="#fff" stroke-width="1.2" fill="none"/></svg>
<svg class="a" style="left:1207px;top:741px" width="16" height="16" viewBox="0 0 16 16"><path d="M1 15A14 14 0 0 1 15 1M4.5 15A10.5 10.5 0 0 1 15 4.5M8 15A7 7 0 0 1 15 8" stroke="#fff" stroke-width="1.2" fill="none"/><circle cx="13" cy="13" r="1.8" fill="#fff"/></svg>
<svg class="a" style="left:1231px;top:739px" width="16" height="19" viewBox="0 0 16 19"><path d="M3 3a8 8 0 0 1 10 0M3 16a8 8 0 0 0 10 0" stroke="#fff" stroke-width="1.1" fill="none"/><rect x="2" y="6" width="8" height="7" rx="1" fill="none" stroke="#fff" stroke-width="1.1"/><path d="M10 9l4-2.5v6L10 10" fill="none" stroke="#fff" stroke-width="1.1"/></svg>
<div class="a nw" style="left:1256.5px;top:732.5px;font-size:11.6px;line-height:15px;color:#fff">10:59 AM</div>
<div class="a nw" style="left:1254.5px;top:750px;font-size:11.9px;line-height:15px;color:#fff">2/24/2026</div>
<svg class="a" style="left:1324px;top:739px" width="28" height="26" viewBox="0 0 28 26"><path d="M1 1h17v12H8l-4 4v-4H1Z" fill="#fff"/><path d="M3.5 4h12M3.5 7h12M3.5 10h8" stroke="#444" stroke-width="1.1"/><circle cx="17.5" cy="16" r="8" fill="#2e2e2e" stroke="#888" stroke-width="1.1"/><text x="17.5" y="20.5" font-family="Liberation Sans" font-size="12" font-weight="bold" fill="#fff" text-anchor="middle">2</text></svg>
<div class="a" style="left:1361px;top:728px;width:1px;height:40px;background:#8a8a8a"></div>
</body></html>
